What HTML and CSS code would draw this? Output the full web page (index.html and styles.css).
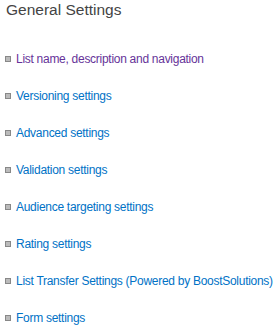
FILE: index.html
```html
<!DOCTYPE html>
<html lang="en">
<head>
  <meta charset="UTF-8" />
  <title>List Settings</title>
  <link rel="stylesheet" href="styles.css">
</head>
<body>
  <div class="settings-group">
    <h3 class="group-title">General Settings</h3>

    <ul class="settings-list">
      <li><a href="#" class="visited">List name, description and navigation</a></li>
      <li><a href="#">Versioning settings</a></li>
      <li><a href="#">Advanced settings</a></li>
      <li><a href="#">Validation settings</a></li>
      <li><a href="#">Audience targeting settings</a></li>
      <li><a href="#">Rating settings</a></li>
      <li><a href="#">List Transfer Settings (Powered by BoostSolutions)</a></li>
      <li><a href="#">Form settings</a></li>
    </ul>
  </div>
</body>
</html>
```

FILE: styles.css
```css
body {
  margin: 0;
  padding: 0;
  background-color: #fff;
  font-family: 'Liberation Sans', Arial, sans-serif;
}

.settings-group {
  padding: 0 0 0 6px;
}

.group-title {
  margin: 0;
  font-size: 15.5px;
  font-weight: 400;
  color: #444;
  line-height: 20px;
}

.settings-list {
  list-style: none;
  margin: 20px 0 0 -1px;
  padding: 0;
}

.settings-list li {
  display: flex;
  align-items: center;
  height: 37px;
}

.settings-list li::before {
  content: "";
  width: 4px;
  height: 4px;
  background-color: #bbb;
  border: 1px solid #888;
  margin-right: 5px;
  flex-shrink: 0;
}

.settings-list a {
  font-size: 12px;
  letter-spacing: -0.28px;
  color: #0072c6;
  text-decoration: none;
  white-space: nowrap;
}

.settings-list a.visited {
  color: #663399;
}
```
